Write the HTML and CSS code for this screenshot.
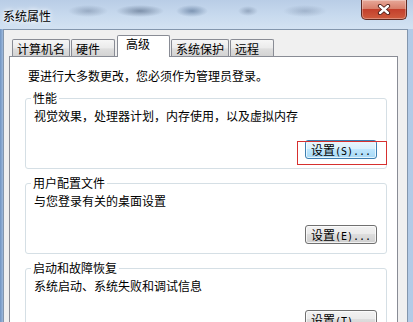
FILE: index.html
```html
<!DOCTYPE html>
<html lang="zh-CN">
<head>
  <meta charset="UTF-8">
  <meta name="viewport" content="width=device-width, initial-scale=1.0">
  <title>系统属性</title>
  <link rel="stylesheet" href="styles.css">
</head>
<body>
  <div class="titlebar">
    <span class="title">系统属性</span>
    <button class="close">
      <svg width="14" height="11" viewBox="0 0 14 11">
        <path d="M3 2 L11 9 M11 2 L3 9" stroke="#4a1c16" stroke-width="4.2" stroke-linecap="round"/>
        <path d="M3 2 L11 9 M11 2 L3 9" stroke="#fff" stroke-width="2.4" stroke-linecap="round"/>
      </svg>
    </button>
  </div>

  <div class="client">
    <div class="tabs">
      <div class="tab">计算机名</div>
      <div class="tab">硬件</div>
      <div class="tab active">高级</div>
      <div class="tab">系统保护</div>
      <div class="tab">远程</div>
    </div>

    <div class="page">
      <p class="intro">要进行大多数更改，您必须作为管理员登录。</p>

      <fieldset class="group">
        <legend>性能</legend>
        <p class="desc">视觉效果，处理器计划，内存使用，以及虚拟内存</p>
        <div class="actions">
          <button class="btn hot">设置<span class="key">(S)...</span></button>
        </div>
        <span class="mark"></span>
      </fieldset>

      <fieldset class="group">
        <legend>用户配置文件</legend>
        <p class="desc">与您登录有关的桌面设置</p>
        <div class="actions">
          <button class="btn">设置<span class="key">(E)...</span></button>
        </div>
      </fieldset>

      <fieldset class="group">
        <legend>启动和故障恢复</legend>
        <p class="desc">系统启动、系统失败和调试信息</p>
        <div class="actions">
          <button class="btn">设置<span class="key">(T)...</span></button>
        </div>
      </fieldset>
    </div>
  </div>
</body>
</html>
```

FILE: styles.css
```css
html, body {
  margin: 0;
}
body {
  width: 413px;
  height: 322px;
  overflow: hidden;
  font-family: "Noto Sans CJK SC", sans-serif;
  font-size: 12px;
  color: #000;
  background: linear-gradient(90deg, #7094c2 0, #9db9dc 3px, #b3cbe7 100%);
}

/* title bar (aero glass) */
.titlebar {
  height: 29px;
  display: flex;
  align-items: flex-start;
  padding: 0 6px 0 3px;
  background:
    radial-gradient(ellipse 20px 6px at 88px 11px, rgba(70, 90, 120, .35), transparent),
    radial-gradient(ellipse 24px 6px at 140px 11px, rgba(40, 60, 90, .45), transparent),
    radial-gradient(ellipse 16px 6px at 192px 11px, rgba(40, 70, 110, .45), transparent),
    radial-gradient(ellipse 10px 5px at 248px 11px, rgba(60, 80, 110, .35), transparent),
    radial-gradient(ellipse 22px 6px at 305px 11px, rgba(80, 100, 130, .3), transparent),
    linear-gradient(#b9cde6, #c8daee 55%, #d3e2f2);
}
.title {
  margin-top: 8px;
  line-height: 15px;
  text-shadow: 0 0 4px #fff, 0 0 6px #fff;
}
.close {
  margin-left: auto;
  width: 46px;
  height: 20px;
  padding: 0;
  display: flex;
  align-items: center;
  justify-content: center;
  border: 1px solid #5e2a22;
  border-top: none;
  border-radius: 0 0 5px 5px;
  background: linear-gradient(#e7a899, #d8806c 45%, #c3402c 50%, #cf5c3e);
  box-shadow: inset 0 0 0 1px rgba(255, 255, 255, .3);
}

/* dialog client area */
.client {
  margin-left: 3px;
  width: 405px;
  height: 293px;
  box-sizing: border-box;
  padding-top: 5px;
  border: 1px solid #8396ad;
  border-bottom: none;
  background: #f0f0f0;
}

.tabs {
  display: flex;
  align-items: flex-end;
  gap: 1px;
  height: 21px;
  padding-left: 8px;
}
.tab {
  height: 17px;
  min-width: 44px;
  box-sizing: border-box;
  padding: 1px 4px 0;
  line-height: 15px;
  border: 1px solid #898c95;
  border-bottom: none;
  border-radius: 2px 2px 0 0;
  background: linear-gradient(#f6f6f6, #ebebeb 50%, #dedede 55%, #d3d3d3);
}
.tab.active {
  height: 22px;
  width: 53px;
  padding: 0 0 0 8px;
  margin: 0 0 -1px 1px;
  background: #fff;
  z-index: 1;
}

.page {
  height: 300px;
  margin: 0 9px 0 5px;
  padding: 12px 10px 0 15px;
  border: 1px solid #898c95;
  background: #fff;
}

.intro {
  margin: 0 0 8px 3px;
  line-height: 14px;
}

.group {
  position: relative;
  min-width: 0;
  margin: 0 0 7px;
  padding: 0 9px 9px 8px;
  border: 1px solid #d5dfe5;
  border-radius: 3px;
}
.group legend {
  margin-left: -3px;
  padding: 0 2px;
  line-height: 14px;
}
.desc {
  margin: 4px 0 0;
  line-height: 14px;
}
.actions {
  display: flex;
  justify-content: flex-end;
  margin-top: 17px;
}

.btn {
  width: 72px;
  height: 19px;
  box-sizing: border-box;
  padding: 0 0 0 5px;
  text-align: left;
  font-family: "Noto Sans CJK SC", sans-serif;
  font-size: 12px;
  line-height: 17px;
  color: #000;
  border: 1px solid #707070;
  border-radius: 3px;
  background: linear-gradient(#f2f2f2, #ebebeb 45%, #dddddd 50%, #cfcfcf);
  box-shadow: inset 0 0 0 1px rgba(255, 255, 255, .7);
}
.btn.hot {
  border-color: #3c7fb1;
  background: linear-gradient(#eaf6fd, #d9f0fc 45%, #bee6fd 50%, #a7d9f5);
}
.key {
  font-family: "DejaVu Sans Mono", monospace;
  font-size: 10px;
}

/* red annotation box round the first button */
.mark {
  position: absolute;
  right: -1px;
  bottom: 3px;
  width: 90px;
  height: 24px;
  box-sizing: border-box;
  border: 1px solid #d6302f;
}
```
